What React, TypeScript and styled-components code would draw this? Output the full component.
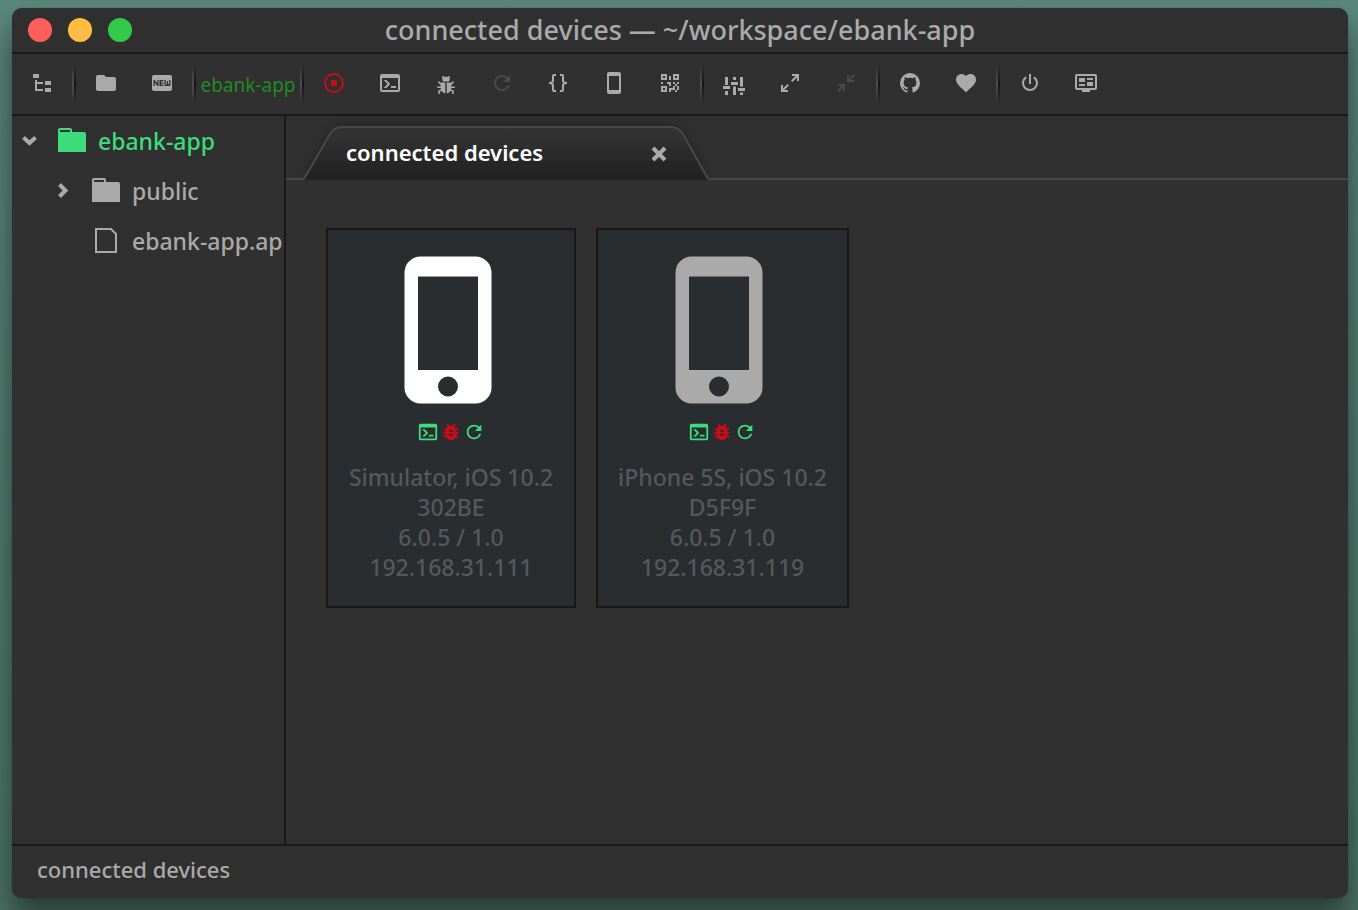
import React from "react";
import styled, { createGlobalStyle } from "styled-components";
import { MdBugReport, MdFiberNew, MdFolder } from "react-icons/md";

const color = {
  bg: "#303030",
  line: "#191919",
  text: "#aaaaaa",
  dim: "#4a4a4a",
  green: "#3ddc7c",
  project: "#228b22",
  red: "#c90d18",
  card: "#292d30",
};

const GlobalStyle = createGlobalStyle`
  * { box-sizing: border-box; }
  body {
    margin: 0;
    background: #5a8678;
    color: ${color.text};
    font-family: "Noto Sans", "Open Sans", sans-serif;
    font-size: 23px;
    font-weight: 500;
  }
  button {
    margin: 0;
    padding: 0;
    border: 0;
    background: none;
    color: inherit;
    font: inherit;
    cursor: pointer;
  }
  svg { display: block; flex: none; }
`;

const Desktop = styled.div`
  display: flex;
  min-height: 100vh;
  padding: 8px 10px 12px 12px;
  overflow: hidden;
  background: linear-gradient(#5b887b, #4c7467);
`;

const Window = styled.div`
  flex: 1;
  min-width: 0;
  display: flex;
  flex-direction: column;
  border-radius: 10px;
  overflow: hidden;
  background: ${color.bg};
  box-shadow: 0 0 1px rgba(0, 0, 0, 0.5), 0 20px 32px rgba(0, 0, 0, 0.5);
`;

const TitleBar = styled.header`
  display: grid;
  grid-template-columns: 1fr auto 1fr;
  align-items: center;
  height: 46px;
  padding: 0 16px;
  border-bottom: 2px solid ${color.line};
`;

const Lights = styled.div`
  display: flex;
  gap: 16px;
`;

const Light = styled.button<{ $color: string }>`
  width: 24px;
  height: 24px;
  border-radius: 50%;
  background: ${(p) => p.$color};
`;

const Title = styled.h1`
  margin: 0;
  font-size: 27px;
  font-weight: 500;
  line-height: 44px;
  white-space: nowrap;
`;

const Toolbar = styled.div`
  display: flex;
  align-items: center;
  height: 62px;
  padding: 0 2px 2px;
  border-bottom: 2px solid ${color.line};
`;

const ToolButton = styled.button<{ $color?: string }>`
  display: flex;
  align-items: center;
  justify-content: center;
  width: 56px;
  height: 40px;
  color: ${(p) => p.$color ?? color.text};
`;

const Separator = styled.span`
  width: 4px;
  height: 38px;
  margin: 2px 2px 0;
  background: linear-gradient(to right, #484b4e 50%, #17191b 50%);
  mask-image: linear-gradient(transparent, #000 45%, #000 55%, transparent);
`;

const ProjectName = styled.span`
  width: 100px;
  padding-top: 4px;
  color: ${color.project};
  font-size: 19px;
  font-weight: 400;
  text-align: center;
  white-space: nowrap;
`;

const Workspace = styled.div`
  flex: 1;
  display: flex;
  min-height: 0;
`;

const Sidebar = styled.nav`
  flex: none;
  width: 274px;
  border-right: 2px solid ${color.line};
  overflow: hidden;
`;

const TreeRow = styled.button<{ $level: number; $active?: boolean }>`
  display: flex;
  align-items: center;
  width: 100%;
  height: 50px;
  padding-left: ${(p) => 8 + p.$level * 34}px;
  color: ${(p) => (p.$active ? color.green : color.text)};
  text-align: left;
  white-space: nowrap;
`;

const Arrow = styled.span`
  display: flex;
  width: 38px;
  color: ${color.text};
`;

const TreeIcon = styled.span`
  display: flex;
  width: 40px;
  padding-bottom: 2px;
`;

const Main = styled.main`
  flex: 1;
  min-width: 0;
`;

const TabBar = styled.div`
  display: flex;
  height: 64px;
  padding: 10px 0 0 18px;
  background: linear-gradient(#484848, #484848) bottom / 100% 2px no-repeat;
`;

const Tab = styled.div`
  position: relative;
  display: flex;
  align-items: center;
  justify-content: space-between;
  width: 404px;
  padding: 0 40px 0 42px;
`;

const TabShape = styled.svg`
  position: absolute;
  inset: 0;
  overflow: visible;
`;

const TabLabel = styled.button`
  position: relative;
  padding-bottom: 2px;
  color: #ffffff;
  font-size: 22px;
  font-weight: 600;
`;

const TabClose = styled.button`
  position: relative;
  padding-top: 2px;
`;

const Devices = styled.div`
  display: flex;
  flex-wrap: wrap;
  gap: 20px;
  padding: 48px 40px;
`;

const Card = styled.article`
  display: flex;
  flex-direction: column;
  align-items: center;
  min-width: 250px;
  padding: 26px 20px 24px;
  border: 2px solid #16181a;
  background: ${color.card};
`;

const Phone = styled.div<{ $color: string }>`
  padding-right: 6px;
  color: ${(p) => p.$color};
`;

const CardActions = styled.div`
  display: flex;
  gap: 1px;
  margin: 17px 0 19px;
`;

const CardAction = styled.button<{ $color: string }>`
  color: ${(p) => p.$color};
`;

const CardText = styled.p`
  margin: 0;
  color: #55585a;
  line-height: 30px;
  text-align: center;
`;

const StatusBar = styled.footer`
  height: 54px;
  padding: 0 25px;
  border-top: 2px solid ${color.line};
  font-size: 22px;
  line-height: 46px;
`;

const paths = {
  tree: "M3,3H9V7H3V3M15,10H21V14H15V10M15,17H21V21H15V17M13,13H7V18H13V20H7L5,20V9H7V11H13V13Z",
  stop: "M12,2A10,10 0 0,0 2,12A10,10 0 0,0 12,22A10,10 0 0,0 22,12A10,10 0 0,0 12,2M12,4A8,8 0 0,1 20,12A8,8 0 0,1 12,20A8,8 0 0,1 4,12A8,8 0 0,1 12,4M9,9V15H15V9",
  console:
    "M20,19V7H4V19H20M20,3A2,2 0 0,1 22,5V19A2,2 0 0,1 20,21H4A2,2 0 0,1 2,19V5C2,3.89 2.9,3 4,3H20M13,17V15H18V17H13M9.58,13L5.57,9H8.4L11.7,12.3C12.09,12.69 12.09,13.33 11.7,13.72L8.42,17H5.59L9.58,13Z",
  refresh:
    "M17.65,6.35C16.2,4.9 14.21,4 12,4A8,8 0 0,0 4,12A8,8 0 0,0 12,20C15.73,20 18.84,17.45 19.73,14H17.65C16.83,16.33 14.61,18 12,18A6,6 0 0,1 6,12A6,6 0 0,1 12,6C13.66,6 15.14,6.69 16.22,7.78L13,11H20V4L17.65,6.35Z",
  braces:
    "M8,3A2,2 0 0,0 6,5V9A2,2 0 0,1 4,11H3V13H4A2,2 0 0,1 6,15V19A2,2 0 0,0 8,21H10V19H8V14A2,2 0 0,0 6,12A2,2 0 0,0 8,10V5H10V3M16,3A2,2 0 0,1 18,5V9A2,2 0 0,0 20,11H21V13H20A2,2 0 0,0 18,15V19A2,2 0 0,1 16,21H14V19H16V14A2,2 0 0,1 18,12A2,2 0 0,1 16,10V5H14V3H16Z",
  cellphone:
    "M17,19H7V5H17M17,1H7C5.89,1 5,1.89 5,3V21A2,2 0 0,0 7,23H17A2,2 0 0,0 19,21V3C19,1.89 18.1,1 17,1Z",
  qrcode:
    "M3,11H5V13H3V11M11,5H13V9H11V5M9,11H13V15H11V13H9V11M15,11H17V13H19V11H21V13H19V15H21V19H19V21H17V19H13V21H11V17H15V15H17V13H15V11M19,19V15H17V19H19M15,3H21V9H15V3M17,5V7H19V5H17M3,3H9V9H3V3M5,5V7H7V5H5M3,15H9V21H3V15M5,17V19H7V17H5Z",
  sliders:
    "M3,6H6V14H3V6M1,15H8V18H1V15M3,20H6V24H3V20M11,6H14V9H11V6M9,11H16V14H9V11M11,15.5H14V24H11V15.5M18,6H21V15.5H18V6M16,17H23V20H16V17M18,21.5H21V24H18V21.5Z",
  expand:
    "M10,21V19H6.41L10.91,14.5L9.5,13.09L5,17.59V14H3V21H10M14.5,10.91L19,6.41V10H21V3H14V5H17.59L13.09,9.5L14.5,10.91Z",
  compress:
    "M19.5,3.09L15,7.59V4H13V11H20V9H16.41L20.91,4.5L19.5,3.09M4,13V15H7.59L3.09,19.5L4.5,20.91L9,16.41V20H11V13H4Z",
  github:
    "M12,2A10,10 0 0,0 2,12C2,16.42 4.87,20.17 8.84,21.5C9.34,21.58 9.5,21.27 9.5,21C9.5,20.77 9.5,20.14 9.5,19.31C6.73,19.91 6.14,17.97 6.14,17.97C5.68,16.81 5.03,16.5 5.03,16.5C4.12,15.88 5.1,15.9 5.1,15.9C6.1,15.97 6.63,16.93 6.63,16.93C7.5,18.45 8.97,18 9.54,17.76C9.63,17.11 9.89,16.67 10.17,16.42C7.95,16.17 5.62,15.31 5.62,11.5C5.62,10.39 6,9.5 6.65,8.79C6.55,8.54 6.2,7.5 6.75,6.15C6.75,6.15 7.59,5.88 9.5,7.17C10.29,6.95 11.15,6.84 12,6.84C12.85,6.84 13.71,6.95 14.5,7.17C16.41,5.88 17.25,6.15 17.25,6.15C17.8,7.5 17.45,8.54 17.35,8.79C18,9.5 18.38,10.39 18.38,11.5C18.38,15.32 16.04,16.16 13.81,16.41C14.17,16.72 14.5,17.33 14.5,18.26C14.5,19.6 14.5,20.68 14.5,21C14.5,21.27 14.66,21.59 15.17,21.5C19.14,20.16 22,16.42 22,12A10,10 0 0,0 12,2Z",
  heart:
    "M12,21.35L10.55,20.03C5.4,15.36 2,12.27 2,8.5C2,5.41 4.42,3 7.5,3C9.24,3 10.91,3.81 12,5.08C13.09,3.81 14.76,3 16.5,3C19.58,3 22,5.41 22,8.5C22,12.27 18.6,15.36 13.45,20.03L12,21.35Z",
  power:
    "M16.56,5.44L15.11,6.89C16.84,7.94 18,9.83 18,12A6,6 0 0,1 12,18A6,6 0 0,1 6,12C6,9.83 7.16,7.94 8.88,6.88L7.44,5.44C5.36,6.88 4,9.28 4,12A8,8 0 0,0 12,20A8,8 0 0,0 20,12C20,9.28 18.64,6.88 16.56,5.44M13,3H11V13H13",
  dashboard:
    "M3,3H21A2,2 0 0,1 23,5V17A2,2 0 0,1 21,19H16V21H8V19H3A2,2 0 0,1 1,17V5A2,2 0 0,1 3,3M3,5V17H21V5H3M5,7H11V11H5V7M5,13H11V15H5V13M13,7H19V9H13V7M13,11H19V15H13V11Z",
};

type IconName = keyof typeof paths;

function Icon({ name, size = 24 }: { name: IconName; size?: number }) {
  return (
    <svg width={size} height={size} viewBox="0 0 24 24" fill="currentColor" fillRule="evenodd" aria-hidden="true">
      <path d={paths[name]} />
    </svg>
  );
}

function Beetle() {
  return (
    <svg width="24" height="24" viewBox="0 0 24 24" aria-hidden="true" overflow="visible">
      <path
        fill="currentColor"
        d="M8.2,5.3Q9.2,4.6 10,5.7H14Q14.8,4.6 15.8,5.3Q16.2,6 15.6,7Q16.2,9.2 14.8,10.4H9.2Q7.8,9.2 8.4,7Q7.8,6 8.2,5.3M7,11.4H11.3V22.6Q8.6,22 7.2,19.6Q6,16 7,11.4M12.7,11.4H17Q18,16 16.8,19.6Q15.4,22 12.7,22.6Z"
      />
      <path
        fill="none"
        stroke="currentColor"
        strokeWidth="1.6"
        d="M7.4,13.8L4.4,10.6M7,16.2H3.2M7.4,19L5,20.2V23M16.6,13.8L19.6,10.6M17,16.2H20.8M16.6,19L19,20.2V23"
      />
    </svg>
  );
}

function Chevron({ open }: { open?: boolean }) {
  return (
    <svg width="18" height="18" viewBox="0 0 18 18" fill="none" stroke="currentColor" strokeWidth="4" aria-hidden="true">
      <path d={open ? "M3.5,5.5L9.5,11L15.5,5.5" : "M5.5,2.5L11.5,8.5L5.5,14.5"} />
    </svg>
  );
}

function FolderIcon() {
  return (
    <svg width="28" height="24" viewBox="0 0 28 24" fill="currentColor" fillRule="evenodd" aria-hidden="true">
      <path d="M0,2Q0,0 2,0H12Q14,0 14,2V4H26Q28,4 28,6V24H0ZM2,2V4H12V2Z" />
    </svg>
  );
}

function FileIcon() {
  return (
    <svg width="28" height="26" viewBox="0 0 28 26" fill="none" stroke="currentColor" strokeWidth="2" aria-hidden="true">
      <path d="M4,2H19L24,7V25H4Z" />
    </svg>
  );
}

function PhoneIcon() {
  return (
    <svg width="88" height="148" viewBox="0 0 88 148" fill="currentColor" fillRule="evenodd" aria-hidden="true">
      <path d="M16.5,0.5H71.5A16,16 0 0,1 87.5,16.5V131.5A16,16 0 0,1 71.5,147.5H16.5A16,16 0 0,1 0.5,131.5V16.5A16,16 0 0,1 16.5,0.5M14,20.5V114H74V20.5H14M44,120.5A10,10 0 0,0 44,140.5A10,10 0 0,0 44,120.5Z" />
    </svg>
  );
}

const tools: ({ icon: IconName; label: string; tint?: string } | "beetle" | "|")[] = [
  { icon: "stop", label: "Stop", tint: color.red },
  { icon: "console", label: "Console" },
  "beetle",
  { icon: "refresh", label: "Reload", tint: color.dim },
  { icon: "braces", label: "Code" },
  { icon: "cellphone", label: "Devices" },
  { icon: "qrcode", label: "QR code" },
  "|",
  { icon: "sliders", label: "Settings" },
  { icon: "expand", label: "Full screen" },
  { icon: "compress", label: "Exit full screen", tint: color.dim },
  "|",
  { icon: "github", label: "GitHub" },
  { icon: "heart", label: "Like" },
  "|",
  { icon: "power", label: "Power" },
  { icon: "dashboard", label: "Dashboard" },
];

const devices = [
  { tint: "#ffffff", lines: ["Simulator, iOS 10.2", "302BE", "6.0.5 / 1.0", "192.168.31.111"] },
  { tint: "#aaaaaa", lines: ["iPhone 5S, iOS 10.2", "D5F9F", "6.0.5 / 1.0", "192.168.31.119"] },
];

export default function App() {
  return (
    <Desktop>
      <GlobalStyle />
      <Window>
        <TitleBar>
          <Lights>
            <Light $color="#ff5f5b" aria-label="Close window" />
            <Light $color="#ffbe41" aria-label="Minimize window" />
            <Light $color="#33c94a" aria-label="Zoom window" />
          </Lights>
          <Title>connected devices — ~/workspace/ebank-app</Title>
        </TitleBar>
        <Toolbar>
          <ToolButton aria-label="Toggle tree"><Icon name="tree" /></ToolButton>
          <Separator />
          <ToolButton aria-label="Open folder"><MdFolder size={24} /></ToolButton>
          <ToolButton aria-label="New project"><MdFiberNew size={24} /></ToolButton>
          <Separator />
          <ProjectName>ebank-app</ProjectName>
          <Separator />
          {tools.map((tool, i) => {
            if (tool === "|") return <Separator key={i} />;
            if (tool === "beetle") return <ToolButton key={i} aria-label="Debug"><Beetle /></ToolButton>;
            return (
              <ToolButton key={i} aria-label={tool.label} $color={tool.tint}>
                <Icon name={tool.icon} />
              </ToolButton>
            );
          })}
        </Toolbar>
        <Workspace>
          <Sidebar aria-label="Project files">
            <TreeRow $level={0} $active>
              <Arrow><Chevron open /></Arrow>
              <TreeIcon><FolderIcon /></TreeIcon>
              ebank-app
            </TreeRow>
            <TreeRow $level={1}>
              <Arrow><Chevron /></Arrow>
              <TreeIcon><FolderIcon /></TreeIcon>
              public
            </TreeRow>
            <TreeRow $level={1}>
              <Arrow />
              <TreeIcon><FileIcon /></TreeIcon>
              ebank-app.ap
            </TreeRow>
          </Sidebar>
          <Main>
            <TabBar>
              <Tab>
                <TabShape width="404" height="54" viewBox="0 0 404 54" aria-hidden="true">
                  <defs>
                    <linearGradient id="tab-fill" x1="0" y1="0" x2="0" y2="1">
                      <stop offset="0" stopColor="#343434" />
                      <stop offset="1" stopColor="#222222" />
                    </linearGradient>
                    <filter id="tab-shadow" x="-10%" y="-40%" width="120%" height="140%">
                      <feDropShadow dx="0" dy="-2" stdDeviation="6" floodColor="#000" floodOpacity="0.3" />
                    </filter>
                  </defs>
                  <path
                    d="M0,54L26,8Q30,1 38,1H367Q375,1 379,8L404,54Z"
                    fill="url(#tab-fill)"
                    filter="url(#tab-shadow)"
                  />
                  <path d="M0,53L26,8Q30,1 38,1H367Q375,1 379,8L404,53" fill="none" stroke="#484848" strokeWidth="2" />
                </TabShape>
                <TabLabel>connected devices</TabLabel>
                <TabClose aria-label="Close tab">
                  <svg width="18" height="18" viewBox="0 0 18 18" stroke="currentColor" strokeWidth="4" aria-hidden="true">
                    <path d="M3,3L15,15M15,3L3,15" />
                  </svg>
                </TabClose>
              </Tab>
            </TabBar>
            <Devices>
              {devices.map((device) => (
                <Card key={device.lines[1]}>
                  <Phone $color={device.tint}><PhoneIcon /></Phone>
                  <CardActions>
                    <CardAction $color={color.green} aria-label="Console"><Icon name="console" size={22} /></CardAction>
                    <CardAction $color={color.red} aria-label="Debug"><MdBugReport size={22} /></CardAction>
                    <CardAction $color={color.green} aria-label="Reload"><Icon name="refresh" size={22} /></CardAction>
                  </CardActions>
                  {device.lines.map((line) => (
                    <CardText key={line}>{line}</CardText>
                  ))}
                </Card>
              ))}
            </Devices>
          </Main>
        </Workspace>
        <StatusBar>connected devices</StatusBar>
      </Window>
    </Desktop>
  );
}
